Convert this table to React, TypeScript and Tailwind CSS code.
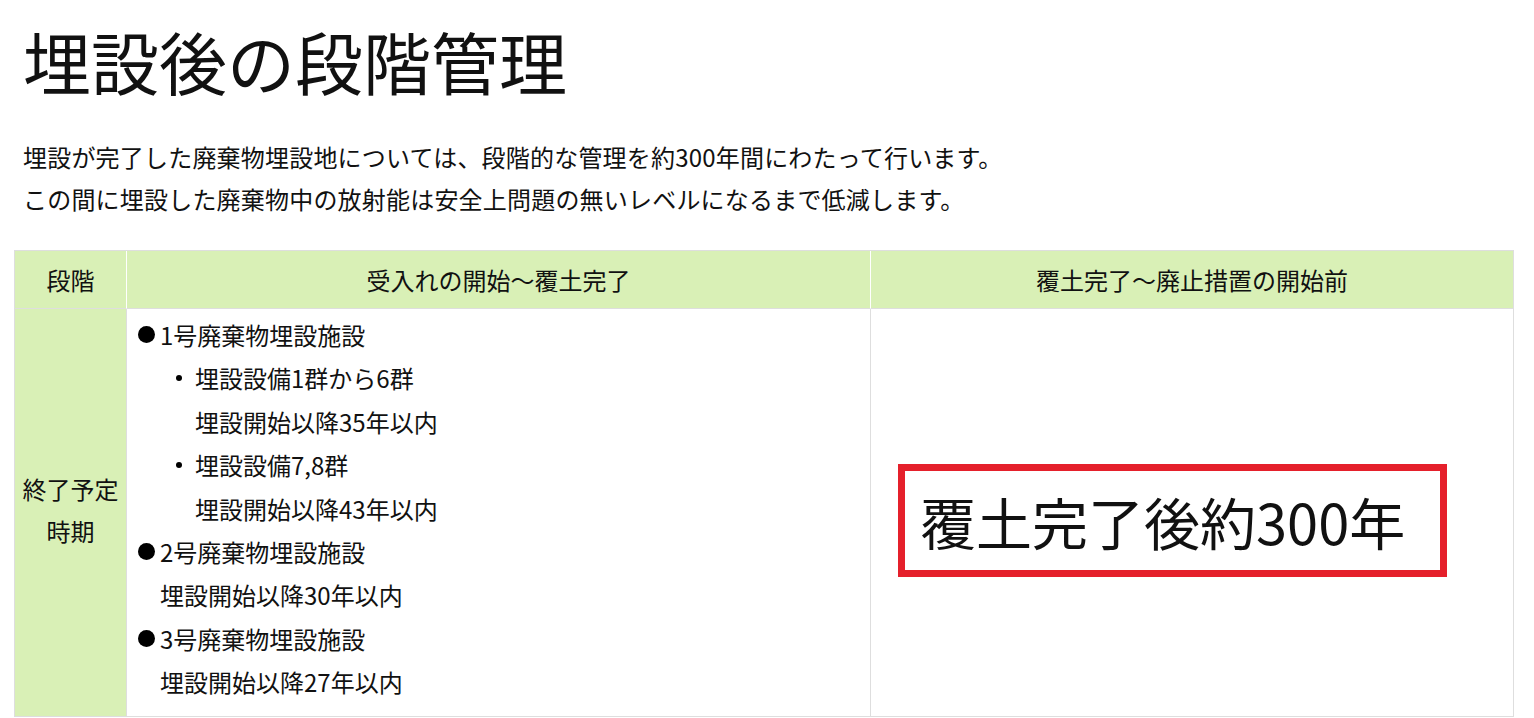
export default function App() {
  return (
    <main className="min-h-screen bg-white px-[14px] font-['Noto_Sans_CJK_JP',sans-serif] text-[#111]">
      <h1 className="ml-[9px] pt-[27px] text-[68px] font-normal leading-none">
        埋設後の段階管理
      </h1>
      <div className="ml-[9px] mt-[41px] text-[24px] leading-[42px] tracking-[0.2px]">
        <p>埋設が完了した廃棄物埋設地については、段階的な管理を約300年間にわたって行います。</p>
        <p>この間に埋設した廃棄物中の放射能は安全上問題の無いレベルになるまで低減します。</p>
      </div>

      <div className="mt-[30px] grid w-fit grid-cols-[112px_744px_643px] border-l border-t border-[#dedede] text-[24px]">
        {/* header */}
        <div className="flex h-[58px] items-center justify-center border-b border-r border-white border-b-[#dedede] bg-[#d9f0b6]">
          段階
        </div>
        <div className="flex h-[58px] items-center justify-center border-b border-r border-white border-b-[#dedede] bg-[#d9f0b6]">
          受入れの開始〜覆土完了
        </div>
        <div className="flex h-[58px] items-center justify-center border-b border-r border-[#dedede] bg-[#d9f0b6]">
          覆土完了〜廃止措置の開始前
        </div>

        {/* body */}
        <div className="flex items-center justify-center border-b border-r border-[#dedede] bg-[#d9f0b6] pb-[4px] text-center leading-[42px]">
          <div>
            終了予定
            <br />
            時期
          </div>
        </div>
        <div className="border-b border-r border-[#dedede] pb-[12px] pl-[11px] pt-[4px] leading-[43.4px]">
          <div className="flex items-center">
            <span className="mr-[5px] h-[17px] w-[17px] rounded-full bg-black" />
            1号廃棄物埋設施設
          </div>
          <div className="flex items-center pl-[38px]">
            <span className="mr-[13px] h-[6px] w-[6px] rounded-full bg-black" />
            埋設設備1群から6群
          </div>
          <div className="pl-[57px]">埋設開始以降35年以内</div>
          <div className="flex items-center pl-[38px]">
            <span className="mr-[13px] h-[6px] w-[6px] rounded-full bg-black" />
            埋設設備7,8群
          </div>
          <div className="pl-[57px]">埋設開始以降43年以内</div>
          <div className="flex items-center">
            <span className="mr-[5px] h-[17px] w-[17px] rounded-full bg-black" />
            2号廃棄物埋設施設
          </div>
          <div className="pl-[22px]">埋設開始以降30年以内</div>
          <div className="flex items-center">
            <span className="mr-[5px] h-[17px] w-[17px] rounded-full bg-black" />
            3号廃棄物埋設施設
          </div>
          <div className="pl-[22px]">埋設開始以降27年以内</div>
        </div>
        <div className="flex items-center border-b border-r border-[#dedede] pl-[27px] pt-[17px]">
          <div className="flex h-[113px] w-[549px] items-center border-[7px] border-[#e5202b] pl-[15px] text-[56px] leading-none">
            覆土完了後約300年
          </div>
        </div>
      </div>
    </main>
  );
}
